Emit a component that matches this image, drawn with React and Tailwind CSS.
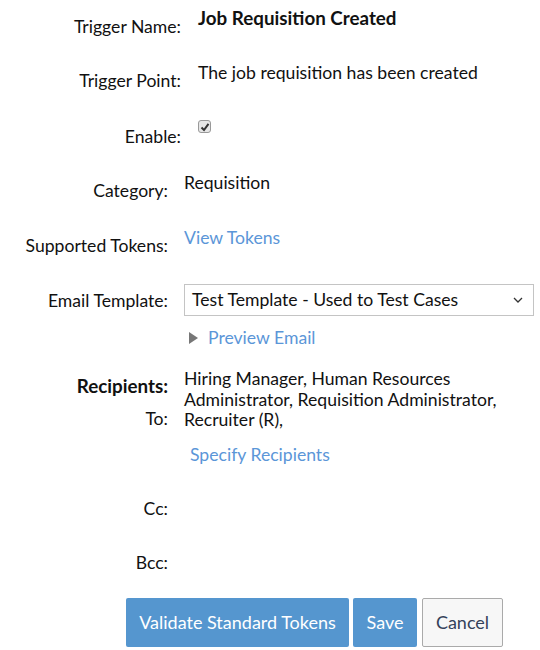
export default function App() {
  return (
    <div className="w-[540px] h-[650px] bg-white text-[#111] text-[17.6px] leading-[20px] font-['Lato','Liberation_Sans',sans-serif]">
      {/* Trigger section */}
      <div className="flex h-[55px]">
        <div className="w-[181px] text-right pt-[17px]">Trigger Name:</div>
        <div className="ml-[17px] pt-[8px] font-bold text-[18.8px]">Job Requisition Created</div>
      </div>
      <div className="flex h-[55px]">
        <div className="w-[181px] text-right pt-[16px]">Trigger Point:</div>
        <div className="ml-[17px] pt-[8px]">The job requisition has been created</div>
      </div>
      <div className="flex h-[55px]">
        <div className="w-[181px] text-right pt-[17px]">Enable:</div>
        <div className="ml-[17px] pt-[10px]">
          <div className="w-[13px] h-[13px] rounded-[3px] border border-[#999] bg-[#e6e6e6] flex items-center justify-center">
            <svg width="10" height="10" viewBox="0 0 10 10">
              <path d="M1.5 5.5 L4 8 L8.5 1.8" fill="none" stroke="#333" strokeWidth="2" />
            </svg>
          </div>
        </div>
      </div>

      {/* Details section */}
      <div className="flex h-[55px]">
        <div className="w-[168px] text-right pt-[16px]">Category:</div>
        <div className="ml-[16px] pt-[8px]">Requisition</div>
      </div>
      <div className="flex h-[55px]">
        <div className="w-[168px] text-right pt-[16px]">Supported Tokens:</div>
        <div className="ml-[16px] pt-[8px] text-[#5b96d8]">View Tokens</div>
      </div>
      <div className="flex">
        <div className="w-[168px] text-right pt-[16px]">Email Template:</div>
        <div className="ml-[16px] pt-[9px]">
          <div className="w-[350px] h-[32px] border border-[#c4c4c4] flex items-center justify-between pl-[7px] pr-[10px]">
            <span>Test Template - Used to Test Cases</span>
            <svg width="10" height="6" viewBox="0 0 10 6">
              <path d="M1 1 L5 5 L9 1" fill="none" stroke="#333" strokeWidth="1.3" />
            </svg>
          </div>
          <div className="flex items-center mt-[12px] h-[20px]">
            <svg width="11" height="14" viewBox="0 0 11 14" className="ml-[4px]">
              <path d="M1 1 L10 7 L1 13 Z" fill="#777" />
            </svg>
            <span className="ml-[9px] text-[#5b96d8]">Preview Email</span>
          </div>
        </div>
      </div>

      {/* Recipients */}
      <div className="flex mt-[21px]">
        <div className="w-[168px] text-right">
          <div className="pt-[7px] font-bold text-[18.8px]">Recipients:</div>
          <div className="pt-[13px]">To:</div>
        </div>
        <div className="ml-[16px] w-[330px] leading-[20.5px]">
          Hiring Manager, Human Resources Administrator, Requisition Administrator, Recruiter (R),
        </div>
      </div>
      <div className="ml-[190px] mt-[14px] text-[#5b96d8]">Specify Recipients</div>
      <div className="w-[168px] text-right mt-[34px]">Cc:</div>
      <div className="w-[168px] text-right mt-[34px]">Bcc:</div>

      {/* Buttons */}
      <div className="flex ml-[126px] mt-[25px] gap-[4px] text-[18px]">
        <button className="h-[49px] w-[223px] rounded-[2px] bg-[#5596cf] text-white">
          Validate Standard Tokens
        </button>
        <button className="h-[49px] w-[64px] rounded-[2px] bg-[#5596cf] text-white">Save</button>
        <button className="h-[49px] w-[81px] ml-[1px] rounded-[2px] bg-[#f7f7f7] border border-[#aaa] text-[#34425a]">
          Cancel
        </button>
      </div>
    </div>
  );
}
